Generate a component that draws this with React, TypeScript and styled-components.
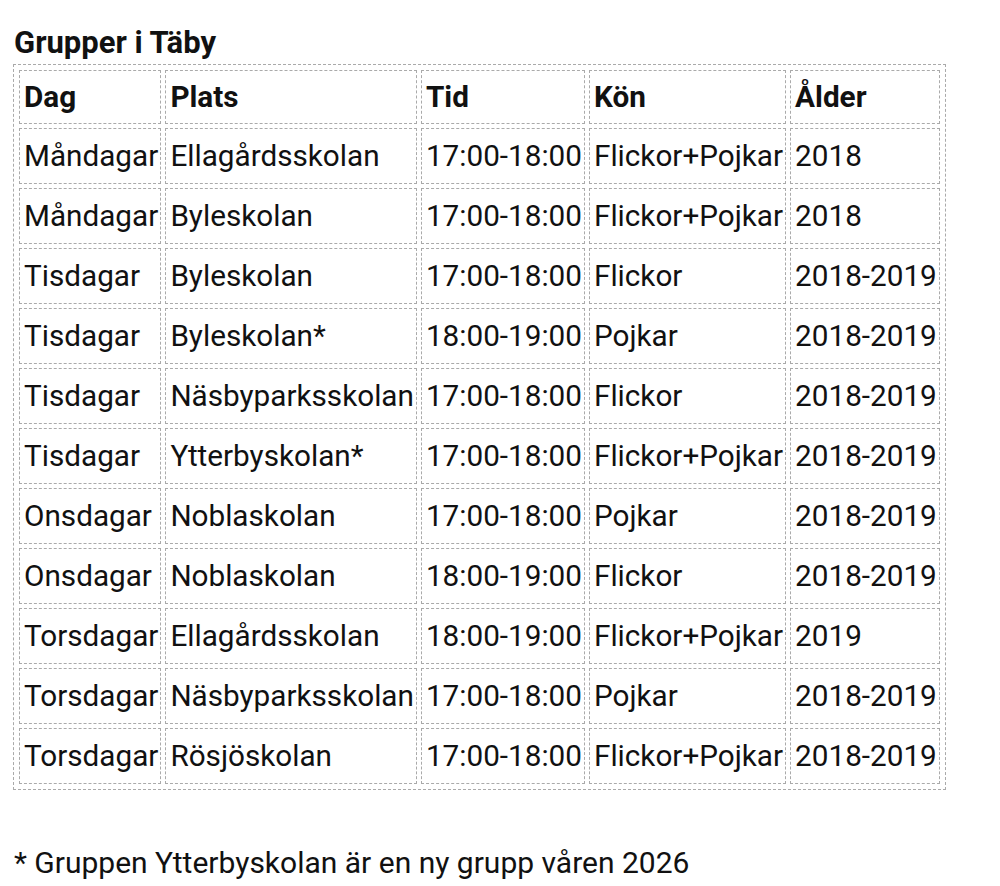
import React from "react";
import styled, { createGlobalStyle } from "styled-components";

const Global = createGlobalStyle`
  html, body { margin: 0; padding: 0; background: #fff; }
  body { font-family: Roboto, "Liberation Sans", sans-serif; color: #111; }
`;

const Page = styled.div`
  padding: 26px 13px 0 13px;
`;

const Title = styled.h2`
  margin: 0 0 4px 1px;
  font-size: 31px;
  font-weight: 700;
  line-height: 34px;
`;

const Table = styled.table`
  border: 1px dashed #aaa;
  border-spacing: 4px;
  padding: 1px;
  font-size: 29.7px;
`;

const Cell = styled.td<{ $head?: boolean }>`
  border: 1px dashed #aaa;
  padding: 0 2px 0 4px;
  height: ${(p) => (p.$head ? 52 : 54)}px;
  white-space: nowrap;
  font-weight: ${(p) => (p.$head ? 700 : 400)};
  vertical-align: middle;
  line-height: 34px;
`;

const Note = styled.p`
  margin: 56px 0 0 1px;
  font-size: 30px;
  line-height: 34px;
`;

const rows: string[][] = [
  ["Måndagar", "Ellagårdsskolan", "17:00-18:00", "Flickor+Pojkar", "2018"],
  ["Måndagar", "Byleskolan", "17:00-18:00", "Flickor+Pojkar", "2018"],
  ["Tisdagar", "Byleskolan", "17:00-18:00", "Flickor", "2018-2019"],
  ["Tisdagar", "Byleskolan*", "18:00-19:00", "Pojkar", "2018-2019"],
  ["Tisdagar", "Näsbyparksskolan", "17:00-18:00", "Flickor", "2018-2019"],
  ["Tisdagar", "Ytterbyskolan*", "17:00-18:00", "Flickor+Pojkar", "2018-2019"],
  ["Onsdagar", "Noblaskolan", "17:00-18:00", "Pojkar", "2018-2019"],
  ["Onsdagar", "Noblaskolan", "18:00-19:00", "Flickor", "2018-2019"],
  ["Torsdagar", "Ellagårdsskolan", "18:00-19:00", "Flickor+Pojkar", "2019"],
  ["Torsdagar", "Näsbyparksskolan", "17:00-18:00", "Pojkar", "2018-2019"],
  ["Torsdagar", "Rösjöskolan", "17:00-18:00", "Flickor+Pojkar", "2018-2019"],
];

const head = ["Dag", "Plats", "Tid", "Kön", "Ålder"];

export default function App() {
  return (
    <Page>
      <Global />
      <Title>Grupper i Täby</Title>
      <Table>
        <tbody>
          <tr>
            {head.map((h) => (
              <Cell key={h} $head>
                {h}
              </Cell>
            ))}
          </tr>
          {rows.map((r, i) => (
            <tr key={i}>
              {r.map((c, j) => (
                <Cell key={j}>{c}</Cell>
              ))}
            </tr>
          ))}
        </tbody>
      </Table>
      <Note>* Gruppen Ytterbyskolan är en ny grupp våren 2026</Note>
    </Page>
  );
}
